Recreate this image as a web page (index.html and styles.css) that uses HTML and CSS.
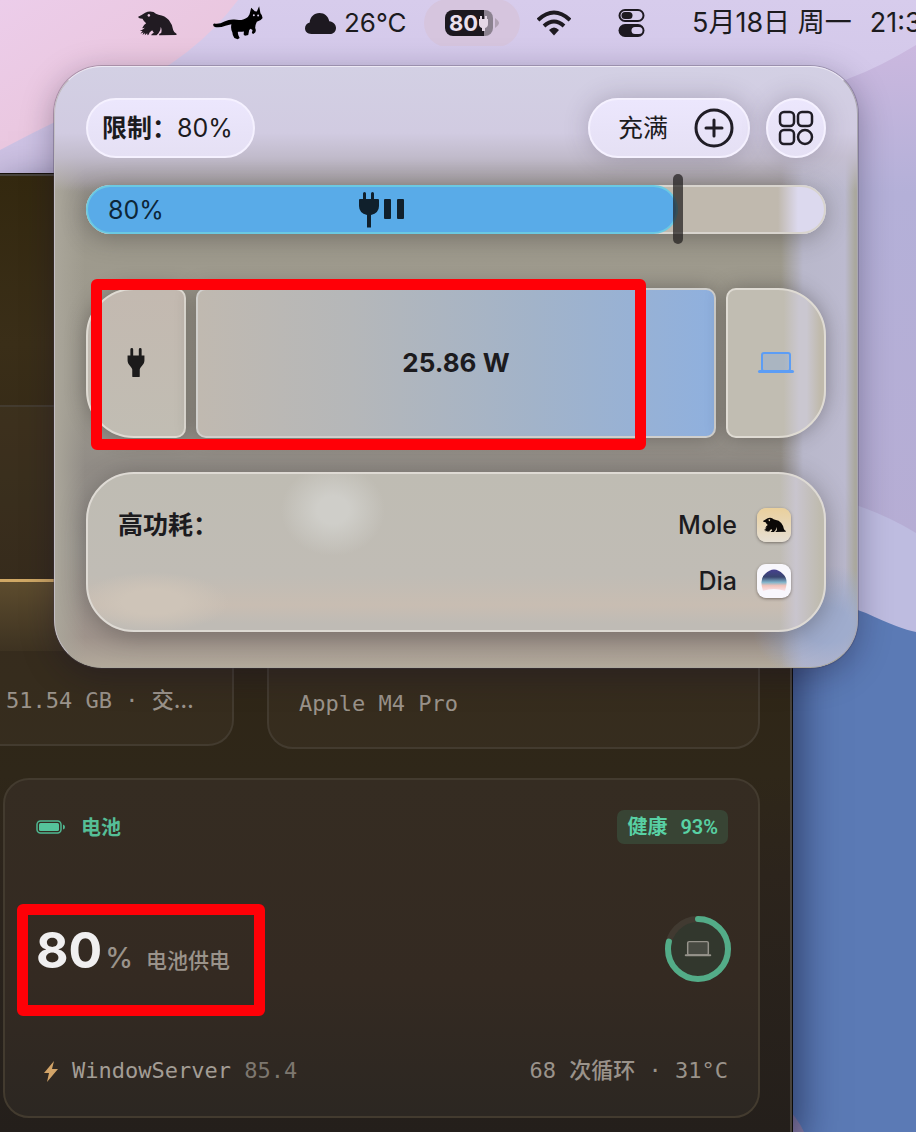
FILE: index.html
```html
<!DOCTYPE html>
<html lang="zh-CN">
<head>
<meta charset="utf-8">
<meta name="viewport" content="width=device-width, initial-scale=1">
<title>电池</title>
<link rel="stylesheet" href="styles.css">
</head>
<body>
<svg class="defs" aria-hidden="true">
  <defs>
    <symbol id="mole" viewBox="27 31 116 75">
      <path fill-rule="evenodd" d="M27 48 Q38 43 48 36 Q60 30 73 34 Q80 40 88 42 Q108 45 119 58 Q129 70 132 88 Q134 95 142 99 L142 103 L90 104 Q88 100 96 97 Q99 88 95 78 Q95 90 88 98 L82 104 L66 104 Q66 99 74 96 L69 89 Q60 94 58 102 L55 104 L54 98 L47 104 L48 97 L40 103 L43 95 L34 99 L40 91 L32 91 Q42 86 47 81 L39 83 Q42 73 51 68 Q42 59 40 54 Q34 54 29 52Z M59 40 a4 4 0 1 0 .1 0Z"/>
    </symbol>
    <symbol id="plug" viewBox="0 0 20 32">
      <path d="M4 1.500a1.500 1.500 0 0 1 3 0V8h6V1.500a1.500 1.500 0 0 1 3 0V8h3v5c0 5-4 6-5 10v7a1 1 0 0 1-1 1H7a1 1 0 0 1-1-1v-7C5 19 1 18 1 13V8h3z"/>
    </symbol>
    <symbol id="laptop" viewBox="0 0 38 24">
      <rect x="5" y="2" width="28" height="18" rx="2" fill="currentColor" fill-opacity=".22" stroke="currentColor" stroke-width="2"/>
      <rect x="1" y="19" width="36" height="3" rx="1.500" fill="currentColor"/>
    </symbol>
  </defs>
</svg>

<div class="desktop">
  <svg class="wallpaper" viewBox="0 0 916 1132" preserveAspectRatio="none" aria-hidden="true">
    <defs>
      <linearGradient id="sky" x1="0" y1="0" x2="0" y2="1"><stop offset="0" stop-color="#d7ccec"/><stop offset=".1" stop-color="#d1c6e8"/><stop offset=".2" stop-color="#c3b7d8"/></linearGradient>
      <linearGradient id="pink" x1="0" y1="0" x2="1" y2="1"><stop offset="0" stop-color="#eccdea"/><stop offset="1" stop-color="#e8c2d6"/></linearGradient>
      <linearGradient id="dusk" x1="0" y1="0" x2="0" y2="1"><stop offset="0" stop-color="#cbb8df"/><stop offset=".3" stop-color="#b4b0d8"/><stop offset="1" stop-color="#b6add4"/></linearGradient>
    </defs>
    <rect width="916" height="1132" fill="url(#sky)"/>
    <path d="M0 0H238Q195 58 120 92Q60 118 0 150Z" fill="url(#pink)"/>
    <path d="M916 45Q880 67 850 78L780 110V540H916Z" fill="url(#dusk)"/>
    <path d="M780 500H840Q882 512 916 533V650H780Z" fill="#bebce0"/>
    <path d="M780 600Q840 602 866 613Q900 629 916 632V1132H780Z" fill="#5b7ab5"/>
    <path d="M780 1100Q798 1118 804 1132H780Z" fill="#8a7fa8"/>
  </svg>

  <header class="menubar">
    <svg class="mb-mole"><use href="#mole"/></svg>
    <svg class="mb-cat" viewBox="245 20 154 103">
      <path d="M357 45 L362 25 L373 36 L379 37 L386 21 L390 42 Q397 49 396 57 Q391 65 379 68 Q374 78 374 87 Q380 99 368 105 L364 102 L366 93 L360 89 L356 93 L353 108 L343 110 L339 106 L340 97 Q330 99 322 98 Q320 104 327 117 L321 121 L311 117 Q305 109 305 100 Q299 90 302 75 L284 80 Q262 88 249 82 Q244 76 250 73 Q265 76 281 67 Q295 60 311 61 Q337 66 352 53Z"/>
      <circle cx="370" cy="48" r="3" fill="#d7ccec"/><circle cx="383" cy="49" r="3" fill="#d7ccec"/>
    </svg>
    <div class="weather">
      <svg class="mb-cloud" viewBox="528 40 92 62"><path d="M547 102C535 102 528 94 528 85C528 76 534 70 542 68C543 52 555 40 571 40C586 40 597 50 600 64C612 66 620 73 620 84C620 95 612 102 601 102Z"/></svg>
      <span>26°C</span>
    </div>
    <button class="battery-menu" type="button" aria-label="80">
      <svg class="mb-battery" viewBox="0 0 54 26">
        <defs><clipPath id="cell"><rect width="48" height="26" rx="8"/></clipPath></defs>
        <g clip-path="url(#cell)"><rect width="39" height="26" fill="#1c181f"/><rect x="39" width="9" height="26" fill="#8c8290"/></g>
        <path d="M50 8Q54 11 54 13T50 18Z" fill="#b1a2b4"/>
        <text x="4" y="21" class="mb-level">80</text>
        <path d="M34 9h1V6h2v3h3V6h2v3h1v5q0 3-3 4v3h-3v-3q-3-1-3-4z" fill="#e5d8e6"/>
      </svg>
    </button>
    <svg class="mb-wifi" viewBox="0 0 34 26">
      <g fill="none" stroke="#1d1920" stroke-width="4"><path d="M1 10Q17-5 33 10"/><path d="M7 16Q17 7 27 16"/></g>
      <path d="M12 20Q17 15 22 20L17 25.500Z" fill="#1d1920"/>
    </svg>
    <svg class="mb-control" viewBox="0 0 26 28">
      <rect x="1" y="1" width="24" height="11" rx="5.500" fill="none" stroke="#1d1920" stroke-width="2"/><rect x="3" y="3" width="11" height="7" rx="3.500"/>
      <rect y="15" width="26" height="13" rx="6.500"/><rect x="13" y="18" width="11" height="7" rx="3.500" fill="#d7ccec"/>
    </svg>
    <time class="clock"><span>5月18日</span> <span>周一</span><span class="hour">21:3</span></time>
  </header>

  <main class="window">
    <div class="tiles">
      <section class="tile tile-memory">
        <div class="chart"></div>
        <p>51.54 GB · 交<span class="dots">…</span></p>
      </section>
      <section class="tile tile-chip"><p>Apple M4 Pro</p></section>
    </div>

    <section class="tile battery">
      <div class="battery-head">
        <h2>
          <svg class="cell" viewBox="0 0 30 14"><rect x="1" y="1" width="24" height="12" rx="3.500" fill="none" stroke="#4fb892" stroke-width="1.500"/><rect x="3" y="3" width="20" height="8" rx="1.500" fill="#55c39b"/><path d="M27 4.500Q29 5 29 7T27 9.500Z" fill="#4fb892"/></svg>
          电池
        </h2>
        <span class="badge">健康 <span>93%</span></span>
      </div>
      <div class="battery-body">
        <div class="reading">
          <strong>80</strong><span class="unit">%</span><span class="source">电池供电</span>
          <div class="mark mark-reading"></div>
        </div>
        <svg class="ring" viewBox="0 0 60 60">
          <circle cx="30" cy="30" r="30" fill="#32372d" stroke="#413a31" stroke-width="6"/>
          <circle cx="30" cy="30" r="30" fill="none" stroke="#53ac88" stroke-width="6" stroke-linecap="round" pathLength="100" stroke-dasharray="79 100" transform="rotate(-90 30 30)"/>
          <svg class="ring-laptop" x="16" y="21" width="28" height="18"><use href="#laptop"/></svg>
        </svg>
      </div>
      <div class="battery-foot">
        <span class="process"><svg class="bolt" viewBox="0 0 14 21"><path d="M10 0L0 12h5L3 21 14 8H8z"/></svg><span>WindowServer <span class="load">85.4</span></span></span>
        <span>68 次循环 · 31°C</span>
      </div>
    </section>
  </main>

  <aside class="popover">
    <div class="toolbar">
      <button class="pill" type="button"><b>限制：</b>80%</button>
      <div class="actions">
        <button class="pill pill-full" type="button">充满
          <svg class="plus" viewBox="0 0 40 40"><circle cx="20" cy="20" r="18"/><path d="M20 12v16M12 20h16"/></svg>
        </button>
        <button class="pill pill-round" type="button" aria-label="菜单">
          <svg class="grid-icon" viewBox="0 0 34 34"><rect x="1" y="1" width="14" height="14" rx="4"/><rect x="19" y="1" width="14" height="14" rx="4"/><rect x="1" y="19" width="14" height="14" rx="4"/><circle cx="26" cy="26" r="7"/></svg>
        </button>
      </div>
    </div>

    <div class="charge">
      <div class="charge-fill">
        <span>80%</span>
        <svg class="paused" viewBox="0 0 46 36"><path d="M4 1.500a1.500 1.500 0 0 1 3 0V7h5V1.500a1.500 1.500 0 0 1 3 0V7h4q1 0 1 1v6q0 7-8 9v12.500H8V23Q0 21 0 14V8q0-1 1-1h3z"/><rect x="25" y="7" width="7" height="20" rx="1"/><rect x="38" y="7" width="7" height="20" rx="1"/></svg>
      </div>
      <input class="limit" type="range" min="0" max="100" value="80" aria-label="限制">
    </div>

    <div class="flow">
      <div class="flow-end flow-source"><svg class="plug"><use href="#plug"/></svg></div>
      <div class="flow-power">25.86 W</div>
      <div class="flow-end flow-device"><svg class="laptop"><use href="#laptop"/></svg></div>
      <div class="mark mark-flow"></div>
    </div>

    <section class="usage">
      <h3>高功耗：</h3>
      <ul>
        <li>Mole <span class="app app-mole"><svg><use href="#mole"/></svg></span></li>
        <li>Dia
          <svg class="app app-dia" viewBox="0 0 34 34">
            <defs><linearGradient id="arc" x1="0" y1="0" x2="0" y2="1"><stop offset="0" stop-color="#47408f"/><stop offset=".35" stop-color="#39456f"/><stop offset=".6" stop-color="#83b5cb"/><stop offset=".75" stop-color="#f1c2ba"/><stop offset="1" stop-color="#fbe4ea"/></linearGradient></defs>
            <path d="M6 27Q2 15 8 10Q17 1 26 10Q32 15 28 27Q17 23 6 27Z" fill="url(#arc)"/>
          </svg>
        </li>
      </ul>
    </section>
  </aside>
</div>
</body>
</html>
```
FILE: styles.css
```css
* { box-sizing: border-box; }

body {
  margin: 0;
  font-family: Inter, "Noto Sans CJK SC", sans-serif;
  color: #1c1b1e;
}

h2, h3, p, ul { margin: 0; padding: 0; }
ul { list-style: none; }
svg { flex: none; display: block; }
button { font: inherit; color: inherit; border: 0; padding: 0; background: none; }
.defs { position: absolute; width: 0; height: 0; }

.desktop {
  position: relative;
  min-height: 100vh;
  display: flex;
  flex-direction: column;
  overflow: hidden;
  isolation: isolate;
}
.wallpaper { position: absolute; inset: 0; width: 100%; height: 100%; z-index: -1; }

/* Menu bar */
.menubar {
  display: flex;
  align-items: center;
  height: 46px;
  padding-left: 138px;
  font-size: 26px;
  line-height: 46px;
  white-space: nowrap;
  overflow: hidden;
}
.mb-mole { width: 39px; height: 25px; margin-right: 35px; fill: #211b22; }
.mb-cat { width: 52px; height: 34px; margin-right: 41px; }
.mb-cloud { width: 31px; height: 21px; fill: #1d1920; }
.weather { flex: none; display: flex; align-items: center; gap: 8px; width: 119px; }
.battery-menu {
  flex: none;
  display: flex;
  justify-content: center;
  align-items: center;
  width: 96px;
  height: 48px;
  border-radius: 24px;
  background: #d6c5de;
  margin-right: 17px;
}
.mb-battery { width: 54px; height: 26px; }
.mb-level { font: 700 22px Inter, sans-serif; fill: #e9dfec; }
.mb-wifi { width: 34px; height: 26px; margin-right: 47px; }
.mb-control { width: 27px; height: 28px; margin-right: 47px; fill: #1d1920; }
.clock { flex: none; font-size: 27px; }
.hour { margin-left: 18px; }

/* Application window */
.window {
  flex: 1;
  display: flex;
  flex-direction: column;
  gap: 29px;
  margin: 127px 123px 0 0;
  padding: 1px 32px 14px 0;
  border-top: 1px solid #17110a;
  border-right: 1px solid #0b0a09;
  background: linear-gradient(#33280f 0, #3a2e18 170px, #2f2515 410px, #2f2719 600px, #2c241c 700px, #241f1b 100%);
  box-shadow: inset -2px 2px 0 #47423a, 8px 12px 36px rgba(10, 15, 45, .55);
  font: 500 22px/28px "DejaVu Sans Mono", "Noto Sans CJK SC", monospace;
  color: #9a938b;
}
.tiles { display: grid; grid-template-columns: 234fr 493fr; gap: 33px; align-items: start; padding-top: 230px; }
.tile {
  border: 2px solid #433b2f;
  border-radius: 26px;
  background: rgba(80, 70, 55, .22);
}
.tile-memory {
  border-left: 0;
  border-top-left-radius: 0;
  border-top-right-radius: 0;
  border-bottom-left-radius: 0;
  padding: 172px 0 29px;
}
.tile-memory p { padding-left: 6px; white-space: nowrap; }
.dots { font-family: Inter, sans-serif; }
.chart {
  height: 72px;
  margin-bottom: 35px;
  border-top: 3px solid #d0a865;
  background: linear-gradient(#5d4c2e, #3d3221);
}
.tile-chip { padding: 283px 30px 29px; }

.battery { margin-left: 3px; padding: 30px 30px 31px 31px; background: linear-gradient(#352c22, #342a22 60%, #2c2722); }
.battery-head, .battery-body, .battery-foot { display: flex; justify-content: space-between; align-items: center; }
.battery-head h2 { display: flex; align-items: center; gap: 15px; font: 700 20px/34px "Noto Sans CJK SC", sans-serif; color: #55be97; }
.cell { width: 30px; height: 14px; }
.badge {
  display: flex;
  gap: 13px;
  padding: 0 10px;
  border-radius: 7px;
  background: #384434;
  font: 600 20px/34px Roboto, "Noto Sans CJK SC", sans-serif;
  color: #58d1a4;
}
.battery-body { margin: 60px 0 64px; }
.reading { position: relative; display: flex; align-items: baseline; padding: 16px 0 2px; font: 500 21px/60px Inter, "Noto Sans CJK SC", sans-serif; }
.reading strong { font-size: 50px; font-weight: 700; color: #f0eff0; }
.unit { margin-left: 3px; font-size: 28px; }
.source { margin-left: 13px; }
.ring { width: 60px; height: 60px; overflow: visible; }
.ring-laptop { color: #96938b; }
.process { display: flex; align-items: center; gap: 14px; color: #a39d95; }
.load { color: #7d776f; }
.bolt { width: 14px; height: 21px; margin-left: 8px; fill: #d2a468; }

/* Battery popover */
.popover {
  position: absolute;
  top: 66px;
  left: 54px;
  right: 58px;
  padding: 31px 31px 35px;
  border: 1px solid #dcd8dd;
  border-color: #eeeaf5 #aaa7b0 #aba79c #c2bec4;
  border-radius: 48px;
  background:
    linear-gradient(#d3d0e4 0, #d1cbe1 66px, rgba(197, 191, 209, .9) 90px, rgba(154, 148, 148, 0) 124px),
    radial-gradient(ellipse 75px 60px at calc(100% - 30px) calc(100% - 42px), #9faccd 30%, transparent),
    linear-gradient(90deg, #aaa69a, transparent 30px),
    linear-gradient(90deg, transparent calc(100% - 76px), #b9b8cb calc(100% - 54px), #bcbacf calc(100% - 12px), #aaa89e calc(100% - 2px)),
    linear-gradient(#9a9494 0, #9a9494 114px, #96928a 128px, #9e9a8d 190px, #9a968c 340px, #918c86 400px, #9a9690 480px, #a1958d 570px, #b2a99b 100%);
  box-shadow: 0 0 0 1px rgba(70, 60, 80, .3), 0 8px 32px rgba(20, 15, 40, .35);
  font-size: 25px;
  line-height: 36px;
}
.toolbar, .actions { display: flex; justify-content: space-between; gap: 16px; }
.pill {
  display: flex;
  align-items: center;
  height: 60px;
  padding: 0 20px 0 14px;
  border: 2px solid #f5f1ff;
  border-radius: 30px;
  background: linear-gradient(#ece7fd, #e5e0f4);
}
.pill-full { padding: 0 14px 0 28px; gap: 26px; box-shadow: 0 0 24px rgba(60, 50, 70, .25); }
.pill-round { width: 60px; padding: 0; justify-content: center; box-shadow: 0 0 24px rgba(60, 50, 70, .25); }
.plus, .grid-icon { fill: none; stroke: #201d26; stroke-width: 3; stroke-linecap: round; }
.plus { width: 40px; height: 40px; }
.grid-icon { width: 34px; height: 34px; overflow: visible; stroke-width: 2.500; }

.charge {
  position: relative;
  height: 49px;
  margin-top: 27px;
  border-radius: 25px;
  background: linear-gradient(90deg, #c0b9ae calc(100% - 48px), #dcd9ee calc(100% - 28px));
  box-shadow: inset 0 0 0 2px #d8d4ce, 0 4px 24px rgba(50, 45, 40, .35);
}
.charge-fill {
  display: grid;
  grid-template-columns: 1fr auto 1fr;
  align-items: center;
  width: 80%;
  height: 100%;
  padding: 0 20px;
  border: 2px solid #6bc9e2;
  border-radius: 25px;
  background: #59abe8;
  color: #0d2638;
}
.paused { width: 46px; height: 36px; fill: #10202c; }
.limit {
  position: absolute;
  inset: -11px -4px -10px 0;
  width: calc(100% + 4px);
  height: 70px;
  margin: 0;
  appearance: none;
  background: none;
}
.limit::-webkit-slider-thumb { appearance: none; width: 10px; height: 70px; border-radius: 5px; background: rgba(30, 27, 27, .7); }

.flow { position: relative; display: flex; gap: 10px; height: 150px; margin-top: 54px; }
.flow-end, .flow-power {
  display: flex;
  align-items: center;
  justify-content: center;
  border: 2px solid #dfdbd3;
  border-radius: 10px;
  box-shadow: 0 0 20px rgba(50, 45, 45, .4);
}
.flow-end { flex: none; width: 100px; }
.flow-source { border-radius: 48px 10px 10px 48px; background: linear-gradient(#c3b9b0, #c1bdb3); }
.flow-power { flex: 1; border-color: #d0cfcc; background: linear-gradient(90deg, #c0b9b0, #b5b7b9 30%, #a2b3c9 65%, #8fb0de); font-size: 26px; font-weight: 700; }
.flow-device { border-radius: 10px 48px 48px 10px; background: linear-gradient(90deg, #c1bdb2 58%, #cac7d0 74%, #cac7d0 82%, #c0baac 96%); color: #5c9df5; }
.plug { width: 20px; height: 30px; fill: #1c1b1b; }
.laptop { width: 38px; height: 24px; }

.usage {
  display: flex;
  justify-content: space-between;
  margin-top: 34px;
  padding: 33px 33px 31px 30px;
  border: 2px solid #dedad4;
  border-radius: 48px;
  background:
    radial-gradient(ellipse 52px 46px at 245px 36px, #cfcec9 30%, transparent),
    radial-gradient(ellipse 76px 30px at 65px 128px, #cec4b8 40%, transparent),
    linear-gradient(90deg, transparent calc(100% - 44px), #c9c5ce calc(100% - 28px), #bfbbaf calc(100% - 4px)),
    linear-gradient(#bfbcb3, #c0bcb5 65%, #c8bdb2 84%, #bfbbb5 96%);
  box-shadow: 0 4px 26px rgba(50, 45, 45, .4);
}
.usage h3 { font-size: 25px; font-weight: 600; }
.usage ul { display: grid; gap: 20px; }
.usage li { display: flex; justify-content: flex-end; align-items: center; gap: 20px; font-weight: 500; }
.app { width: 34px; height: 34px; border-radius: 9px; box-shadow: 0 1px 3px rgba(50, 40, 30, .5); }
.app-mole { display: grid; place-items: center; background: linear-gradient(#ead09c, #e6dfd3); }
.app-mole svg { width: 23px; height: 16px; fill: #0b0907; }
.app-dia { background: #f8f7fc; }

/* Red highlight frames */
.mark { position: absolute; border: 11px solid #ff0007; border-radius: 6px; }
.mark-flow { inset: -9px 180px -12px 5px; }
.mark-reading { inset: 0 -35px -23px -19px; }
```
